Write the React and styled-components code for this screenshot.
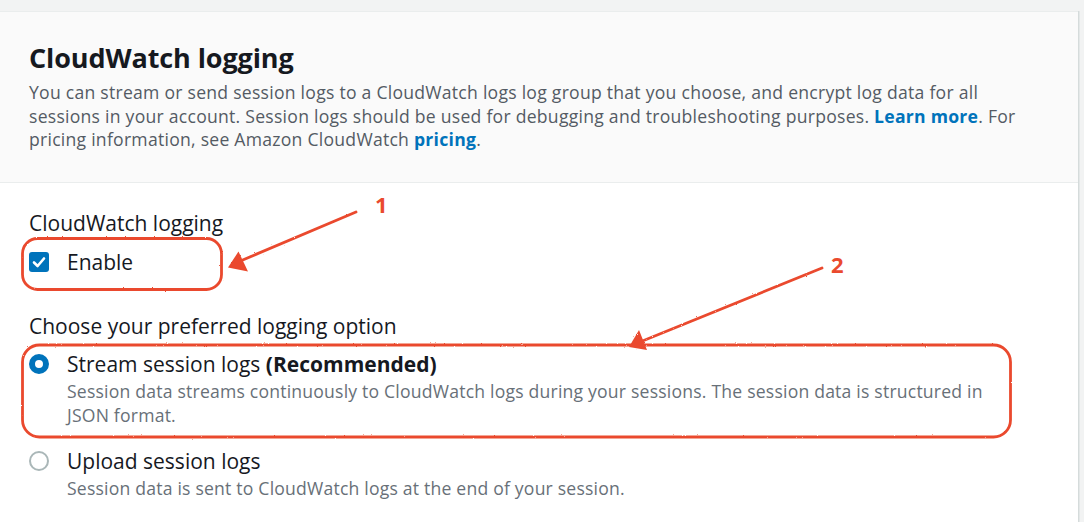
import React from "react";
import styled, { createGlobalStyle } from "styled-components";

const GlobalStyle = createGlobalStyle`
  html, body { margin: 0; padding: 0; }
  body {
    background: #f2f3f3;
    font-family: "Open Sans", "Noto Sans", Arial, sans-serif;
    color: #16191f;
  }
`;

const Page = styled.div`
  position: relative;
  min-height: 100vh;
  padding: 11px 6px 0 0;
  box-sizing: border-box;
  overflow: hidden;
`;

const Card = styled.section`
  background: #ffffff;
  border-top: 1px solid #eaeded;
  box-shadow: 1px 0 0 0 #d5dbdb, 2px 0 0 0 #e4e8e8;
`;

const Header = styled.header`
  background: #fafafa;
  border-bottom: 1px solid #eaeded;
  padding: 29px 29px 30px 29px;
`;

const Title = styled.h2`
  margin: 0;
  font-size: 27px;
  line-height: 33px;
  font-weight: 700;
  color: #16191f;
  letter-spacing: -0.1px;
`;

const HeaderDesc = styled.p`
  margin: 7px 0 0;
  max-width: 1000px;
  font-size: 17.6px;
  letter-spacing: 0.25px;
  line-height: 23.6px;
  color: #545b64;
`;

const Link = styled.a`
  color: #0073bb;
  font-weight: 700;
  text-decoration: none;
`;

const Body = styled.div`
  padding: 25px 29px 40px;
`;

const FieldLabel = styled.div`
  font-size: 21px;
  line-height: 30px;
  color: #16191f;
`;

const CheckRow = styled.label`
  display: flex;
  align-items: center;
  gap: 18px;
  margin-top: 9px;
  font-size: 21px;
  line-height: 30px;
  color: #16191f;
`;

const CheckBox = styled.span`
  width: 20px;
  height: 20px;
  border-radius: 3px;
  background: #0073bb;
  display: inline-flex;
  align-items: center;
  justify-content: center;
  flex: none;
`;

const Section = styled.div`
  margin-top: ${(p) => p.$gap || 0}px;
`;

const RadioOption = styled.label`
  display: grid;
  grid-template-columns: 20px 1fr;
  column-gap: 18px;
  margin-top: ${(p) => p.$gap || 0}px;
`;

const RadioDot = styled.span`
  grid-column: 1;
  grid-row: 1;
  align-self: center;
  width: 20px;
  height: 20px;
  box-sizing: border-box;
  border-radius: 50%;
  background: #ffffff;
  border: ${(p) => (p.$checked ? "6px solid #0073bb" : "2px solid #aab7b8")};
`;

const RadioTitle = styled.span`
  grid-column: 2;
  font-size: 21px;
  line-height: 30px;
  color: #16191f;
`;

const Strong = styled.b`
  font-weight: 700;
`;

const RadioDesc = styled.span`
  grid-column: 2;
  max-width: 940px;
  font-size: 17.6px;
  letter-spacing: 0.2px;
  line-height: 24px;
  color: #687078;
`;

const Overlay = styled.svg`
  position: absolute;
  left: 0;
  top: 0;
  width: 1084px;
  height: 522px;
  pointer-events: none;
  overflow: visible;
`;

const red = "#ea4a2e";

function Annotations() {
  return (
    <Overlay viewBox="0 0 1084 522">
      <defs>
        <filter id="rough" x="-5%" y="-5%" width="110%" height="110%">
          <feTurbulence type="fractalNoise" baseFrequency="0.9" numOctaves="2" seed="3" />
          <feDisplacementMap in="SourceGraphic" scale="1.8" />
        </filter>
      </defs>
      <g filter="url(#rough)" stroke={red} fill="none" strokeWidth="2.8" strokeLinecap="round">
        <rect x="22.5" y="238.5" width="199" height="51" rx="15" />
        <rect x="22.5" y="345" width="988" height="92" rx="17" />
        <line x1="356" y1="212" x2="238" y2="262" />
        <line x1="822" y1="268" x2="640" y2="342" />
      </g>
      <g filter="url(#rough)" fill={red}>
        <polygon points="228,267.5 238.5,251.5 248,271.5" />
        <polygon points="629,347 639,330 647,350" />
      </g>
      <text x="375" y="213" fill={red} fontFamily="'Open Sans', Arial, sans-serif" fontWeight="700" fontSize="22">1</text>
      <text x="831" y="273" fill={red} fontFamily="'Open Sans', Arial, sans-serif" fontWeight="700" fontSize="22">2</text>
    </Overlay>
  );
}

export default function App() {
  return (
    <>
      <GlobalStyle />
      <Page>
        <Card>
          <Header>
            <Title>CloudWatch logging</Title>
            <HeaderDesc>
              You can stream or send session logs to a CloudWatch logs log group that you choose, and encrypt log data for all sessions in your account. Session logs should be used for debugging and troubleshooting purposes. <Link href="#">Learn more</Link>. For pricing information, see Amazon CloudWatch <Link href="#">pricing</Link>.
            </HeaderDesc>
          </Header>
          <Body>
            <FieldLabel>CloudWatch logging</FieldLabel>
            <CheckRow>
              <CheckBox>
                <svg width="20" height="20" viewBox="0 0 20 20">
                  <polyline points="5,10.5 8.6,14 15,6.5" fill="none" stroke="#fff" strokeWidth="2.6" strokeLinecap="round" strokeLinejoin="round" />
                </svg>
              </CheckBox>
              Enable
            </CheckRow>
            <Section $gap={34}>
              <FieldLabel>Choose your preferred logging option</FieldLabel>
              <RadioOption $gap={8}>
                <RadioDot $checked />
                <RadioTitle>
                  Stream session logs <Strong>(Recommended)</Strong>
                </RadioTitle>
                <RadioDesc>
                  Session data streams continuously to CloudWatch logs during your sessions. The session data is structured in JSON format.
                </RadioDesc>
              </RadioOption>
              <RadioOption $gap={19}>
                <RadioDot />
                <RadioTitle>Upload session logs</RadioTitle>
                <RadioDesc>Session data is sent to CloudWatch logs at the end of your session.</RadioDesc>
              </RadioOption>
            </Section>
          </Body>
        </Card>
        <Annotations />
      </Page>
    </>
  );
}
